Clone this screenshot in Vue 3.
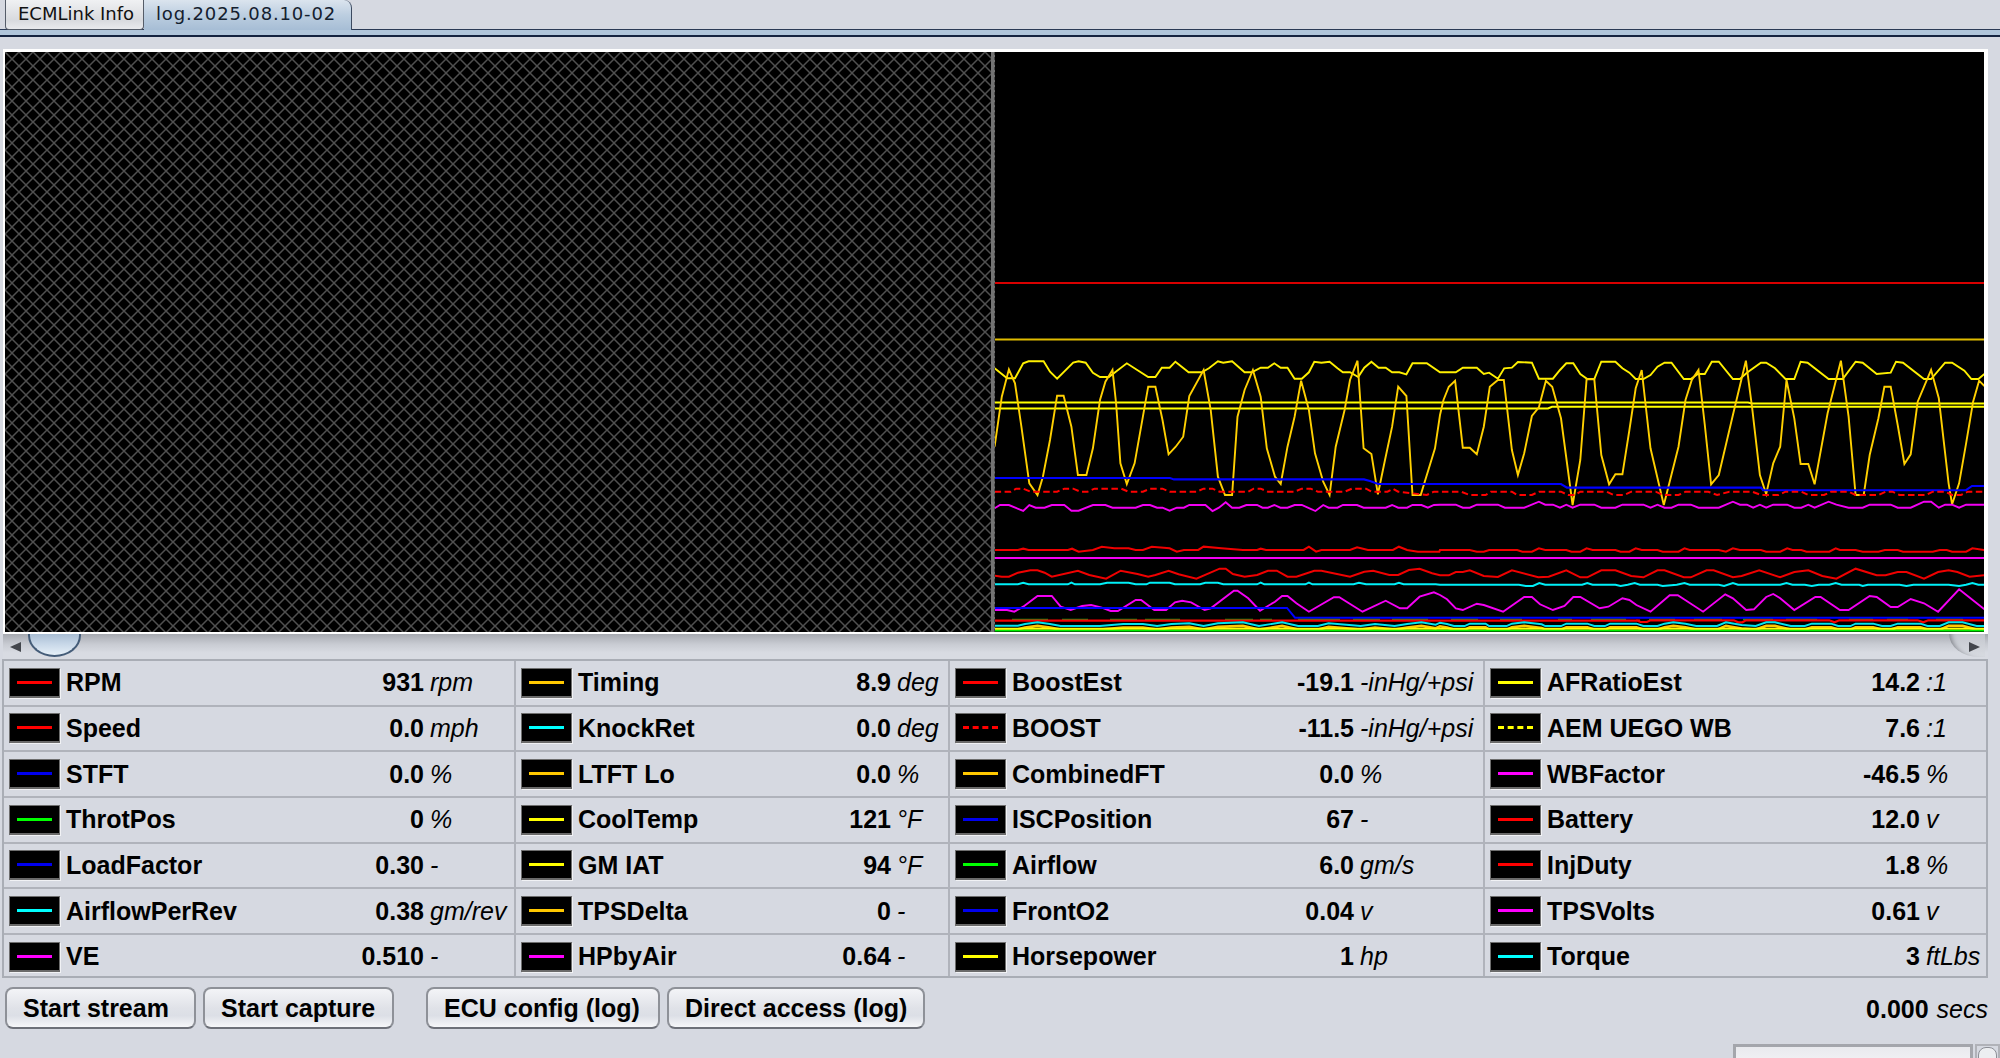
<script setup>
const z2 = (s) => s.map(([x, y]) => [900 + x / 2.8, 260 + y / 3])
const z9 = (s) => s.map(([x, y]) => [1440 + x / 2.851, 350 + y / 3])
const z10 = (s) => s.map(([x, y]) => [1440 + x / 2.851, 500 + y / 3])
const pts = (s) => s.map(([x, y]) => `${x.toFixed(1)},${y.toFixed(1)}`).join(' ')
const H = (y, x1 = 995, x2 = 1984) => [[x1, y], [x2, y]]

const yellowTop = [...z2([[265,325],[300,355],[322,355],[345,310],[360,304],[402,304],[420,335],[440,356],[485,308],[500,304],[520,308],[540,338],[560,351],[585,351],[635,310],[695,351],[715,351],[733,323],[755,323],[771,305],[808,337],[845,337],[865,325],[890,304],[905,308],[930,304],[965,337],[985,337],[1010,323],[1030,323],[1048,310],[1066,323],[1085,323],[1105,356],[1125,356],[1145,337],[1160,305],[1180,308],[1203,305],[1225,325],[1240,337],[1260,337],[1283,351],[1300,323],[1320,305],[1340,323],[1360,323],[1378,337],[1398,337],[1418,343],[1435,310],[1475,310],[1512,337]]),
  ...z9([[0,67],[45,67],[65,53],[105,53],[125,72],[140,68],[165,86],[183,55],[205,53],[222,36],[262,38],[282,86],[322,86],[342,60],[360,40],[380,40],[400,72],[420,87],[440,87],[460,35],[500,35],[520,55],[540,68],[558,87],[580,87],[600,75],[620,50],[640,38],[660,38],[695,87],[715,87],[735,72],[755,72],[775,35],[795,35],[835,87],[855,87],[875,68],[915,38],[930,38],[955,55],[985,87],[1010,87],[1028,35],[1048,38],[1108,87],[1148,87],[1185,35],[1205,38],[1245,72],[1285,68],[1300,35],[1320,38],[1380,87],[1400,87],[1440,38],[1460,38],[1495,62],[1515,87],[1535,87],[1552,72]])]

const gold = [...z2([[265,560],[285,410],[305,328],[322,370],[340,500],[362,670],[385,705],[400,650],[420,540],[440,407],[458,407],[480,500],[498,645],[522,645],[540,565],[560,420],[575,365],[595,330],[605,430],[617,610],[635,672],[657,610],[680,470],[695,380],[715,380],[735,480],[752,583],[772,560],[793,530],[810,408],[850,330],[870,450],[890,650],[910,705],[930,705],[945,470],[965,390],[988,330],[1010,410],[1027,565],[1050,650],[1066,672],[1085,560],[1105,470],[1123,362],[1145,450],[1162,580],[1185,665],[1203,705],[1220,560],[1245,450],[1260,360],[1281,302],[1298,565],[1320,582],[1338,703],[1358,600],[1378,500],[1395,380],[1418,408],[1435,705],[1458,705],[1498,565]]),
  ...z9([[0,195],[10,150],[25,110],[43,92],[65,293],[85,293],[105,313],[125,230],[142,110],[165,90],[182,90],[205,300],[222,375],[240,310],[262,198],[282,172],[302,92],[320,110],[345,205],[378,465],[400,330],[418,88],[440,88],[460,315],[482,403],[500,373],[520,373],[540,240],[558,115],[575,60],[600,295],[638,465],[680,290],[700,150],[718,90],[737,60],[755,225],[773,403],[795,375],[835,195],[872,32],[890,175],[912,375],[930,432],[950,340],[970,290],[988,90],[1010,205],[1028,342],[1050,342],[1068,403],[1105,190],[1143,32],[1165,200],[1185,435],[1208,435],[1225,315],[1250,205],[1267,110],[1285,110],[1305,225],[1324,342],[1342,313],[1362,155],[1400,60],[1422,145],[1450,400],[1460,463],[1480,400],[1500,280],[1520,155],[1537,92],[1552,108]])]

const boostDash = [...z2([[265,695],[310,695],[325,686],[345,686],[365,695],[440,695],[460,686],[485,686],[505,695],[525,695],[545,686],[620,686],[640,695],[680,695],[700,686],[735,686],[755,695],[830,695],[850,686],[875,686],[895,695],[975,695],[990,686],[1010,686],[1030,695],[1105,695],[1125,686],[1150,686],[1170,695],[1245,695],[1265,686],[1305,686],[1320,695],[1365,695],[1380,686],[1395,695],[1475,705],[1495,695]]),
  ...z9([[0,425],[60,425],[85,435],[130,435],[145,425],[205,425],[220,435],[262,435],[282,425],[345,425],[365,435],[385,435],[400,425],[475,425],[495,435],[525,435],[545,425],[615,425],[635,435],[680,435],[700,425],[765,425],[790,435],[825,425],[890,425],[915,435],[965,435],[985,425],[1030,425],[1050,435],[1095,435],[1115,425],[1165,425],[1185,435],[1250,435],[1270,425],[1290,425],[1310,435],[1385,435],[1405,425],[1440,425],[1460,435],[1485,435],[1505,425],[1552,425]])]

const magentaSmall = [...z2([[265,745],[280,735],[305,735],[345,753],[362,735],[380,743],[405,743],[425,735],[460,735],[480,752],[500,752],[540,735],[575,735],[595,743],[660,743],[680,735],[700,735],[720,743],[735,743],[755,752],[775,743],[795,743],[810,735],[855,735],[875,753],[893,743],[912,727],[930,743],[950,743],[970,735],[1000,735],[1015,743],[1030,743],[1048,735],[1065,743],[1085,743],[1105,735],[1125,735],[1163,753],[1185,735],[1200,743],[1225,743],[1240,735],[1280,735],[1298,743],[1360,743],[1378,735],[1395,743],[1420,743],[1435,735],[1460,735],[1478,743],[1495,735]]),
  ...z10([[0,14],[45,14],[65,23],[85,23],[105,14],[165,14],[185,23],[240,23],[282,5],[300,14],[322,14],[342,23],[360,14],[378,23],[400,14],[440,14],[460,23],[500,23],[520,14],[580,14],[600,23],[620,14],[640,23],[660,23],[680,14],[715,14],[737,23],[795,23],[835,5],[855,14],[875,14],[893,23],[912,14],[930,23],[950,14],[990,14],[1010,23],[1030,23],[1050,14],[1068,23],[1108,5],[1130,14],[1165,23],[1205,23],[1225,14],[1285,14],[1305,23],[1342,23],[1380,5],[1400,5],[1422,23],[1440,14],[1460,14],[1480,23],[1500,14],[1552,14]])]

const redFlat = [...z2([[265,870],[330,870],[345,866],[360,870],[470,870],[482,866],[500,875],[540,870],[565,860],[600,865],[640,865],[660,870],[680,870],[705,860],[755,865],[775,875],[795,870],[835,870],[850,860],[900,865],[960,870],[1000,870],[1010,866],[1025,870],[1130,870],[1145,860],[1165,875],[1180,870],[1260,870],[1280,862],[1310,870],[1380,870],[1397,860],[1420,870],[1450,875],[1510,875]]),
  ...z10([[0,150],[85,150],[105,155],[125,155],[140,150],[220,150],[235,155],[262,155],[282,145],[300,150],[360,150],[375,155],[400,155],[418,145],[435,150],[500,150],[515,155],[540,155],[558,145],[575,150],[620,150],[635,155],[680,155],[697,145],[712,150],[795,150],[815,155],[835,145],[855,150],[915,150],[930,155],[970,155],[990,145],[1005,150],[1030,150],[1045,155],[1110,155],[1128,145],[1140,150],[1185,150],[1205,155],[1250,155],[1268,150],[1305,150],[1320,155],[1405,155],[1425,150],[1445,150],[1460,155],[1500,155],[1518,145],[1552,150]])]

const redWave = [...z2([[265,947],[285,950],[305,950],[330,938],[365,931],[385,931],[405,938],[425,950],[498,932],[530,945],[577,956],[618,932],[665,942],[695,950],[715,945],[752,932],[780,943],[830,956],[895,926],[912,926],[932,942],[965,950],[1000,945],[1030,932],[1055,932],[1085,950],[1110,950],[1160,932],[1180,932],[1260,950],[1300,935],[1325,932],[1370,945],[1395,945],[1425,930],[1455,926],[1490,940]]),
  ...z10([[0,226],[25,226],[45,216],[65,216],[85,211],[125,228],[165,231],[205,211],[280,232],[310,230],[360,211],[400,232],[420,232],[460,211],[500,211],[545,228],[580,232],[620,211],[640,211],[695,232],[715,232],[760,211],[780,211],[835,232],[860,228],[910,211],[970,232],[1010,216],[1050,211],[1090,228],[1130,236],[1185,206],[1245,226],[1270,226],[1305,216],[1330,216],[1380,236],[1420,216],[1450,211],[1475,216],[1510,230],[1552,226]])]

const cyanFlat = [...z2([[265,973],[330,973],[345,968],[360,973],[470,973],[480,968],[490,973],[560,973],[580,968],[640,968],[660,973],[690,973],[700,968],[755,968],[770,973],[840,973],[855,968],[890,968],[905,973],[1000,973],[1010,968],[1020,973],[1135,973],[1145,968],[1155,973],[1270,973],[1285,968],[1305,973],[1385,973],[1397,968],[1410,973],[1500,973]]),
  ...z10([[0,254],[225,254],[245,258],[265,258],[283,249],[300,254],[405,254],[420,249],[435,254],[500,254],[515,258],[535,254],[555,249],[570,254],[620,254],[635,258],[675,254],[697,249],[712,254],[795,254],[810,258],[835,249],[850,254],[970,254],[988,249],[1005,254],[1040,254],[1060,258],[1080,254],[1110,254],[1128,249],[1145,254],[1195,254],[1205,258],[1220,254],[1310,254],[1330,258],[1350,254],[1450,254],[1480,258],[1500,254],[1518,249],[1535,254],[1552,254]])]

const magentaBig = [...z2([[265,1050],[300,1050],[320,1055],[345,1040],[385,1008],[425,1008],[450,1040],[478,1050],[510,1038],[535,1035],[565,1043],[590,1053],[610,1053],[660,1020],[675,1020],[712,1050],[745,1050],[770,1027],[790,1022],[815,1027],[853,1050],[870,1045],[935,992],[945,992],[975,1015],[1008,1052],[1050,1025],[1070,1008],[1085,1008],[1110,1030],[1145,1055],[1215,1012],[1230,1012],[1295,1055],[1360,1022],[1400,1045],[1420,1045],[1455,1010],[1495,997]]),
  ...z10([[0,285],[20,298],[45,325],[65,330],[105,311],[125,315],[180,335],[240,291],[262,291],[285,313],[322,330],[355,318],[380,291],[400,291],[455,325],[480,320],[520,295],[540,300],[560,315],[600,335],[655,286],[678,286],[750,335],[813,283],[835,295],[873,330],[895,328],[930,291],[950,282],[970,295],[1010,330],[1070,291],[1085,291],[1140,330],[1165,330],[1225,288],[1245,291],[1285,321],[1305,321],[1342,297],[1380,310],[1420,335],[1480,268],[1552,328]])]

const cyanLow = [...z2([[265,1097],[330,1097],[350,1092],[385,1087],[420,1092],[450,1098],[530,1098],[560,1098],[625,1092],[680,1092],[720,1098],[760,1092],[810,1090],[850,1098],[890,1090],[960,1087],[1005,1098],[1070,1087],[1115,1098],[1170,1098],[1200,1090],[1250,1094],[1290,1098],[1330,1092],[1385,1098],[1420,1092],[1460,1087],[1500,1094]]),
  ...z10([[0,368],[20,372],[40,378],[70,378],[85,371],[130,371],[140,378],[190,378],[205,371],[240,367],[290,373],[300,378],[345,378],[360,371],[420,371],[440,378],[470,378],[485,371],[560,371],[580,378],[620,378],[640,371],[665,367],[700,371],[730,378],[790,378],[815,367],[860,375],[900,378],[930,367],[955,367],[1000,378],[1040,378],[1060,371],[1115,371],[1135,378],[1170,378],[1185,371],[1235,371],[1260,378],[1285,378],[1305,371],[1370,371],[1390,378],[1425,378],[1450,367],[1490,367],[1530,378],[1552,378]])]

const goldLow = cyanLow.map(([x, y]) => [x, y + 3.6])

const redBase = [[995, 620.6], [1640, 620.6], ...z10([[560,361],[572,366],[590,366],[600,361],[838,361],[850,367],[862,367],[872,361],[1110,361],[1125,367],[1138,361],[1362,361],[1378,367],[1392,361],[1552,361]])]

const traces = [
  { id: 'red-top', color: '#d80000', width: 2, points: pts(H(283)) },
  { id: 'gold-top', color: '#e0bc00', width: 2, points: pts(H(339.5)) },
  { id: 'yellow-a', color: '#ffff00', width: 2, points: pts([[995,402.5],[1748,402.5],[1752,403.4],[1984,403.4]]) },
  { id: 'yellow-b', color: '#ffff00', width: 2, points: pts([[995,408.4],[1548,408.4],[1552,406.8],[1984,406.8]]) },
  { id: 'yellow-top', color: '#fff000', width: 1.9, points: pts(yellowTop) },
  { id: 'gold', color: '#ffd000', width: 1.9, points: pts(gold) },
  { id: 'blue', color: '#0000ff', width: 2.1, points: pts([[995,478],[1170,478],[1174,479.4],[1364,479.4],[1370,481],[1378,484],[1561,484],[1567,487.6],[1761,487.6],[1763,490.2],[1966,490.2],[1972,486],[1984,486]]) },
  { id: 'boost', color: '#ff0000', width: 2, dash: '6.5 3.5', points: pts(boostDash) },
  { id: 'mag-small', color: '#f400f4', width: 1.9, points: pts(magentaSmall) },
  { id: 'red-flat', color: '#f00000', width: 2.1, points: pts(redFlat) },
  { id: 'mag-flat', color: '#f400f4', width: 2.1, points: pts(H(558)) },
  { id: 'red-wave', color: '#f00000', width: 2, points: pts(redWave) },
  { id: 'cyan-flat', color: '#00f0f8', width: 2, points: pts(cyanFlat) },
  { id: 'mag-big', color: '#f400f4', width: 1.9, points: pts(magentaBig) },
  { id: 'blue-low', color: '#0000ff', width: 1.9, points: pts([[995,608],[1287,608],[1295,617.7],[1984,617.7]]) },
]

const greenRuns = [[1012,1048],[1062,1088],[1110,1137],[1145,1180],[1225,1253],[1260,1272],[1298,1340],[1353,1380],[1392,1428],[1451,1478],[1500,1522],[1558,1572],[1591,1626],[1649,1675],[1694,1722],[1743,1773],[1786,1817],[1849,1873],[1887,1908],[1936,1963]]
const greenPath = greenRuns.map(([a, b]) => `M${a} 619.4H${b}`).join('')

const lowTraces = [
  { id: 'red-base', color: '#f80000', width: 2.2, points: pts(redBase) },
  { id: 'gold-low', color: '#ffc800', width: 2.6, points: pts(goldLow) },
  { id: 'cyan-low', color: '#00e4f0', width: 1.9, points: pts(cyanLow) },
  { id: 'yellow-base', color: '#ffff00', width: 2, points: pts(H(628.8)) },
  { id: 'green-base', color: '#00f000', width: 1.6, points: pts(H(630.6)) },
]

const RED = '#ff0000', BLUE = '#0000ee', GREEN = '#00ff00', CYAN = '#00ffff', MAG = '#ff00ff', GOLD = '#ffc800', YEL = '#ffff00'
const columns = [
  [
    ['RPM', '931', 'rpm', RED], ['Speed', '0.0', 'mph', RED], ['STFT', '0.0', '%', BLUE], ['ThrotPos', '0', '%', GREEN],
    ['LoadFactor', '0.30', '-', BLUE], ['AirflowPerRev', '0.38', 'gm/rev', CYAN], ['VE', '0.510', '-', MAG],
  ],
  [
    ['Timing', '8.9', 'deg', GOLD], ['KnockRet', '0.0', 'deg', CYAN], ['LTFT Lo', '0.0', '%', GOLD], ['CoolTemp', '121', '°F', YEL],
    ['GM IAT', '94', '°F', YEL], ['TPSDelta', '0', '-', GOLD], ['HPbyAir', '0.64', '-', MAG],
  ],
  [
    ['BoostEst', '-19.1', '-inHg/+psi', RED], ['BOOST', '-11.5', '-inHg/+psi', RED, true], ['CombinedFT', '0.0', '%', GOLD], ['ISCPosition', '67', '-', BLUE],
    ['Airflow', '6.0', 'gm/s', GREEN], ['FrontO2', '0.04', 'v', BLUE], ['Horsepower', '1', 'hp', YEL],
  ],
  [
    ['AFRatioEst', '14.2', ':1', YEL], ['AEM UEGO WB', '7.6', ':1', YEL, true], ['WBFactor', '-46.5', '%', MAG], ['Battery', '12.0', 'v', RED],
    ['InjDuty', '1.8', '%', RED], ['TPSVolts', '0.61', 'v', MAG], ['Torque', '3', 'ftLbs', CYAN],
  ],
]
const cells = columns.flatMap((col, c) =>
  col.map(([name, value, unit, color, dashed], r) => ({ key: `${c}-${r}`, col: c, last: r === 6, name, value, unit, color, dashed })),
)
const buttons = [
  { label: 'Start stream', cls: 'b1' },
  { label: 'Start capture', cls: 'b1' },
  { label: 'ECU config (log)', cls: 'b2' },
  { label: 'Direct access (log)', cls: 'b3' },
]
</script>

<template>
  <div class="app">
    <header class="tabs">
      <div class="tab-strip">
        <div class="tab idle">ECMLink Info</div>
        <div class="tab active">log.2025.08.10-02</div>
      </div>
      <div class="tab-rule"></div>
    </header>

    <section class="frame">
      <svg class="hatch" width="100%" height="100%">
        <defs>
          <pattern id="crosshatch" width="14" height="14" patternUnits="userSpaceOnUse">
            <path d="M-1 -1L15 15M15 -1L-1 15" stroke="#505050" stroke-width="1.5" fill="none" />
          </pattern>
        </defs>
        <rect width="100%" height="100%" fill="#000" />
        <rect width="100%" height="100%" fill="url(#crosshatch)" />
      </svg>
      <div class="divider"></div>
      <svg class="plot" viewBox="995 52 989 580" preserveAspectRatio="none">
        <polyline
          v-for="t in traces"
          :key="t.id"
          :points="t.points"
          :stroke="t.color"
          :stroke-width="t.width"
          :stroke-dasharray="t.dash"
          fill="none"
        />
        <path :d="greenPath" stroke="#12a012" stroke-width="1.4" fill="none" />
        <polyline
          v-for="t in lowTraces"
          :key="t.id"
          :points="t.points"
          :stroke="t.color"
          :stroke-width="t.width"
          fill="none"
        />
      </svg>
    </section>

    <div class="scrollbar">
      <span class="arrow left"></span>
      <span class="thumb"></span>
      <span class="corner"></span>
      <span class="arrow right"></span>
    </div>

    <section class="table">
      <div
        v-for="cell in cells"
        :key="cell.key"
        class="cell"
        :class="[`col${cell.col}`, { last: cell.last }]"
      >
        <span class="swatch">
          <i class="swatch-line" :class="{ dashed: cell.dashed }" :style="{ borderColor: cell.color }"></i>
        </span>
        <span class="name">{{ cell.name }}</span>
        <span class="value">{{ cell.value }}</span>
        <span class="unit">{{ cell.unit }}</span>
      </div>
    </section>

    <footer class="actions">
      <button v-for="b in buttons" :key="b.label" class="btn" :class="b.cls" type="button">{{ b.label }}</button>
      <div class="time"><b>0.000</b> <em>secs</em></div>
    </footer>

    <div class="status">
      <div class="status-box"><div class="status-fill"></div></div>
      <div class="status-knob"><div class="status-knob-in"></div></div>
    </div>
  </div>
</template>

<style>
html, body { margin: 0; background: #d6d9e1; overflow: hidden; }
</style>

<style scoped>
.app {
  width: 2000px;
  height: 1058px;
  overflow: hidden;
  background: #d6d9e1;
  font-family: "Liberation Sans", Arial, sans-serif;
  color: #000;
  display: flex;
  flex-direction: column;
}

/* tabs */
.tabs { height: 37px; flex: none; display: flex; flex-direction: column; }
.tab-strip {
  height: 30px;
  padding-left: 5px;
  display: flex;
  align-items: flex-end;
  flex: none;
  box-sizing: border-box;
  border-bottom: 1px solid #2b3a55;
}
.tab {
  font-family: "DejaVu Sans", sans-serif;
  font-size: 18px;
  height: 30px;
  line-height: 28px;
  box-sizing: border-box;
  flex: none;
  margin-bottom: -1px;
}
.idle {
  width: 139px;
  padding-left: 12px;
  background: linear-gradient(#f0f1f3, #d8dade 70%, #e9eaed);
  border: 1px solid #555c68;
  border-top: none;
  border-radius: 0 0 4px 4px;
  color: #111;
}
.active {
  width: 208px;
  padding-left: 12px;
  letter-spacing: 0.85px;
  color: #14202e;
  background: linear-gradient(#dbe4ee, #bccee0 50%, #a6bdd5);
  border-right: 1px solid #3c4a60;
  border-radius: 0 8px 0 0;
}
.tab-rule {
  height: 7px;
  flex: none;
  box-sizing: border-box;
  background: #b0c5da;
  border-bottom: 2px solid #15233f;
}

/* chart */
.frame {
  margin: 12px 12px 0 3px;
  height: 585px;
  flex: none;
  box-sizing: border-box;
  border: solid #fff;
  border-width: 3px 4px 2px 2px;
  background: #000;
  display: flex;
}
.hatch { flex: 1; min-width: 0; display: block; }
.divider {
  width: 4px;
  flex: none;
  background: #737373;
  border-right: 1px dashed #444;
  box-sizing: border-box;
}
.plot { width: 989px; height: 580px; flex: none; display: block; }

/* scrollbar */
.scrollbar {
  height: 25px;
  flex: none;
  margin: 0 12px 0 3px;
  position: relative;
  background: linear-gradient(#a6a9b0, #c8cbd2 40%, #d8dbe2 75%);
}
.arrow {
  position: absolute;
  top: 8px;
  width: 0;
  height: 0;
  border-top: 5.5px solid transparent;
  border-bottom: 5.5px solid transparent;
}
.arrow.left { left: 7px; border-right: 11px solid #43464c; }
.arrow.right { right: 8px; border-left: 11px solid #43464c; }
.thumb {
  position: absolute;
  left: 25px;
  top: 0;
  width: 53px;
  height: 23px;
  box-sizing: border-box;
  background: linear-gradient(#a9bdd3, #c6d6e7 45%, #e6f0f8);
  border: 2px solid #445c78;
  border-top: none;
  border-radius: 0 0 27px 27px / 0 0 22px 22px;
}
.corner {
  position: absolute;
  right: 3px;
  top: 0;
  width: 36px;
  height: 23px;
  background: linear-gradient(#c4c7ce, #d8dbe1);
  border-bottom-left-radius: 30px 23px;
  box-shadow: inset 6px 0 5px -4px #7f8289;
}

/* table */
.table {
  margin-left: 2px;
  width: 1986px;
  height: 319px;
  flex: none;
  box-sizing: border-box;
  border: 2px solid #a9adb5;
  display: grid;
  grid-template-columns: 512px 434px 535px 501px;
  grid-template-rows: repeat(6, 45.65px) 1fr;
  grid-auto-flow: column;
}
.cell {
  --unit: 83px;
  min-height: 0;
  min-width: 0;
  box-sizing: border-box;
  border-bottom: 2px solid #b0b3bb;
  border-right: 2px solid #b0b3bb;
  padding-left: 5px;
  display: grid;
  grid-template-columns: 51px 1fr auto var(--unit);
  column-gap: 0;
  align-items: center;
  font-size: 25px;
  white-space: nowrap;
}
.cell.last { border-bottom: none; padding-top: 3px; }
.col1 { --unit: 50px; }
.col2 { --unit: 122px; }
.col3 { --unit: 59px; border-right: none; }
.swatch {
  width: 51px;
  height: 30px;
  box-sizing: border-box;
  background: #000;
  border: 1px solid #6e6e6e;
  border-bottom: 2px solid #6a6a6a;
  box-shadow: 1px 1px 0 #f1f2f5;
  display: flex;
  align-items: center;
  justify-content: center;
}
.swatch-line { display: block; width: 35px; height: 0; border-top: 3px solid; }
.swatch-line.dashed { border-top-style: dashed; }
.name { font-weight: 700; padding-left: 6px; }
.value {
  font-weight: 700;
  font-size: 25px;
  padding-right: 7px;
  text-align: right;
}
.unit { font-style: italic; font-size: 25px; margin-left: -1px; }

/* actions */
.actions {
  margin-top: 9px;
  height: 42px;
  padding: 0 12px 0 5px;
  display: flex;
  align-items: center;
  flex: none;
  gap: 7px;
}
.btn {
  height: 42px;
  padding: 0 0 0 16px;
  text-align: left;
  box-sizing: border-box;
  font: 700 25px "Liberation Sans", Arial, sans-serif;
  color: #000;
  border: 2px solid #8e9198;
  border-bottom-color: #6d7078;
  border-radius: 8px;
  background: linear-gradient(#f3f4f7, #e0e2e8 50%, #dcdfe6 70%, #f6f7f9);
}
.b1 { width: 191px; }
.b1 + .b2 { margin-left: 25px; }
.b2 { width: 234px; }
.b3 { width: 258px; }
.time { margin-left: auto; font-size: 25px; white-space: nowrap; padding-top: 2px; }
.time em { font-style: italic; font-size: 25px; margin-left: 1px; }

/* status */
.status {
  margin-top: 15px;
  height: 14px;
  flex: none;
  display: flex;
  justify-content: flex-end;
  gap: 2px;
  overflow: hidden;
}
.status-box {
  width: 240px;
  height: 30px;
  box-sizing: border-box;
  border: 3px solid #a4a6ac;
  background: #fff;
}
.status-fill { height: 100%; background: linear-gradient(#e9eaee, #f6f6f8); }
.status-knob {
  width: 25px;
  height: 30px;
  box-sizing: border-box;
  border: 2px solid #b0b2b8;
  padding: 1px;
}
.status-knob-in {
  height: 100%;
  background: #eceef1;
  border: 1px solid #8c8f96;
  border-radius: 8px 8px 0 0;
}
</style>
